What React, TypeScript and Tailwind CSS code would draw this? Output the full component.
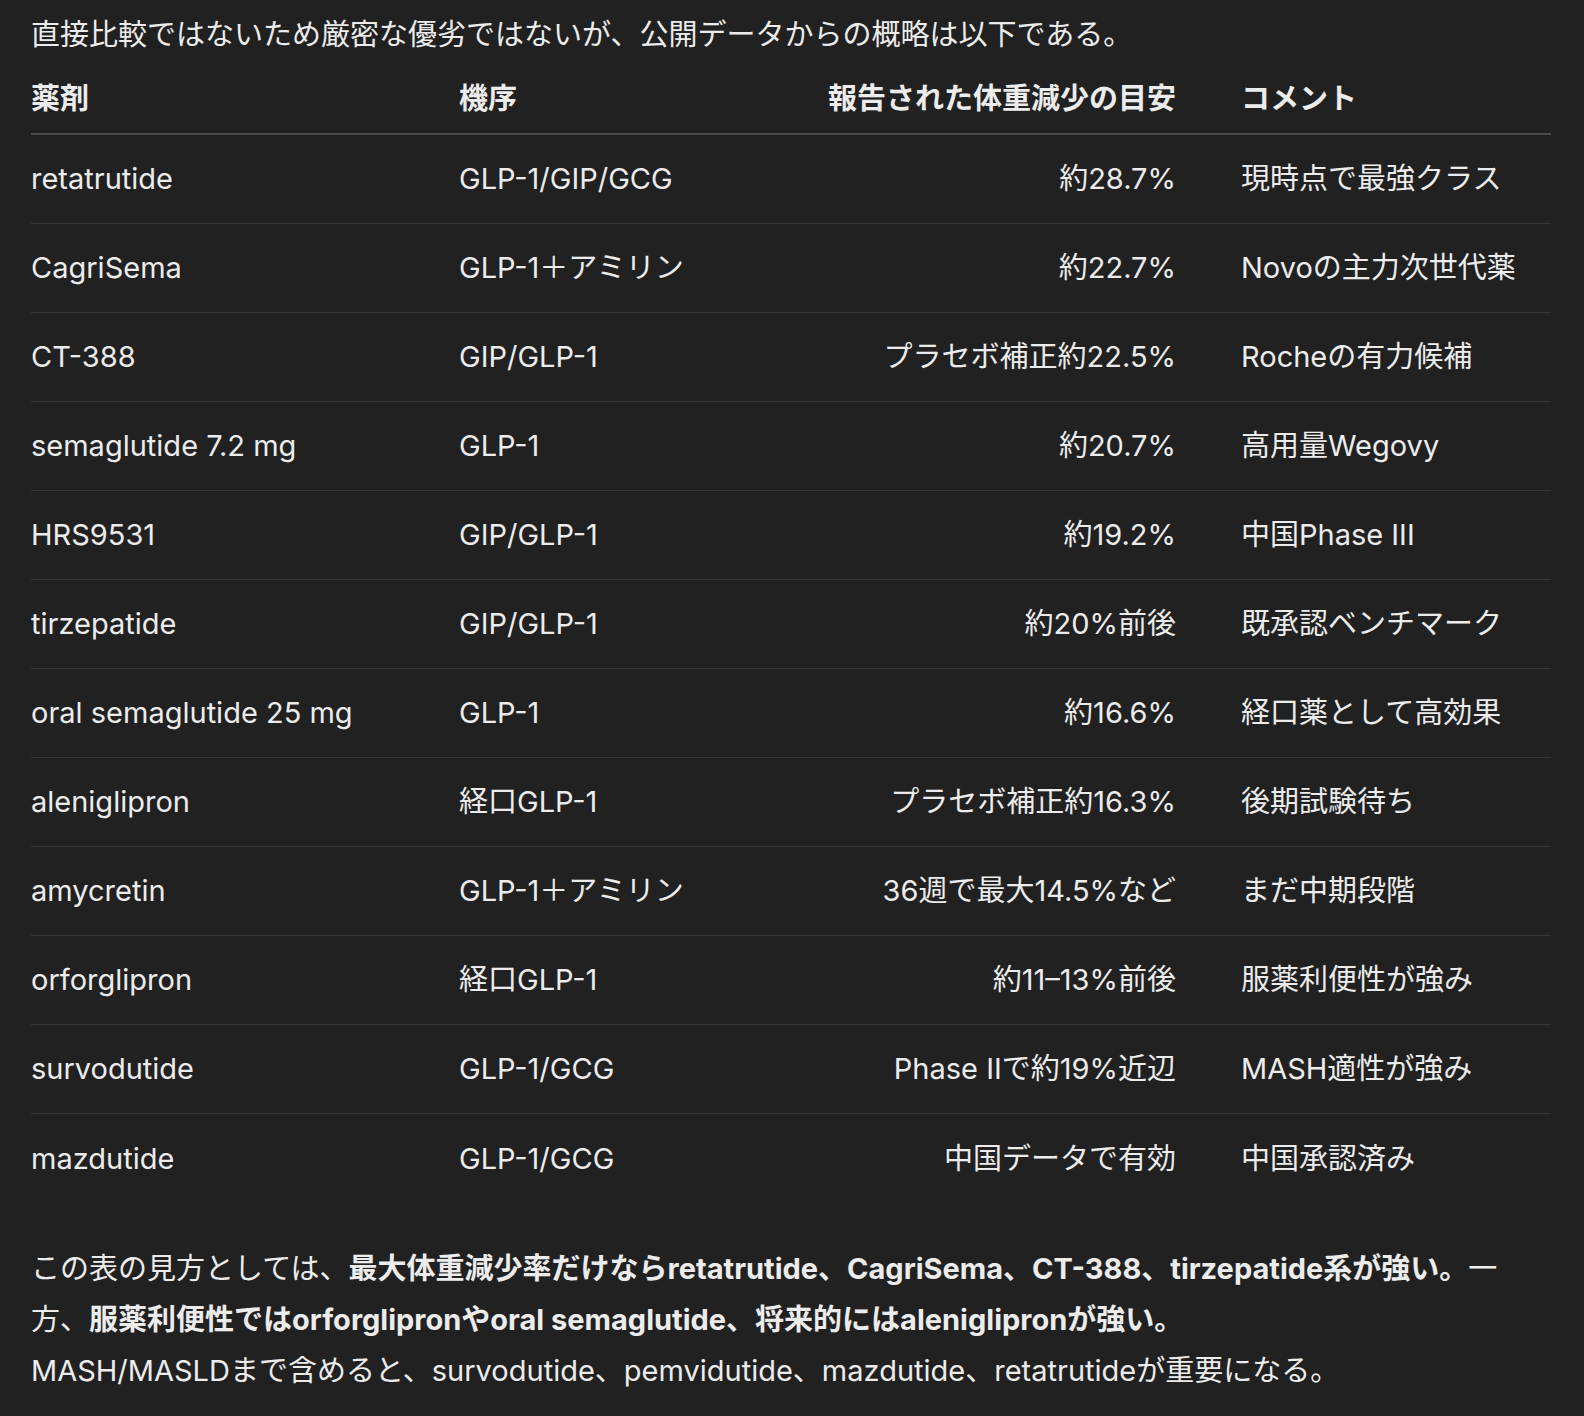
import React from "react";

const rows: [string, string, string, string][] = [
  ["retatrutide", "GLP-1/GIP/GCG", "約28.7%", "現時点で最強クラス"],
  ["CagriSema", "GLP-1＋アミリン", "約22.7%", "Novoの主力次世代薬"],
  ["CT-388", "GIP/GLP-1", "プラセボ補正約22.5%", "Rocheの有力候補"],
  ["semaglutide 7.2 mg", "GLP-1", "約20.7%", "高用量Wegovy"],
  ["HRS9531", "GIP/GLP-1", "約19.2%", "中国Phase III"],
  ["tirzepatide", "GIP/GLP-1", "約20%前後", "既承認ベンチマーク"],
  ["oral semaglutide 25 mg", "GLP-1", "約16.6%", "経口薬として高効果"],
  ["aleniglipron", "経口GLP-1", "プラセボ補正約16.3%", "後期試験待ち"],
  ["amycretin", "GLP-1＋アミリン", "36週で最大14.5%など", "まだ中期段階"],
  ["orforglipron", "経口GLP-1", "約11–13%前後", "服薬利便性が強み"],
  ["survodutide", "GLP-1/GCG", "Phase IIで約19%近辺", "MASH適性が強み"],
  ["mazdutide", "GLP-1/GCG", "中国データで有効", "中国承認済み"],
];

export default function App() {
  return (
    <div
      className="min-h-[1416px] w-[1584px] bg-[#212121] text-[#ececec] px-[31px] pt-[11px] text-[29px]"
      style={{ fontFamily: 'Inter, "Noto Sans CJK JP", sans-serif' }}
    >
      <p className="leading-[48px] whitespace-nowrap">
        直接比較ではないため厳密な優劣ではないが、公開データからの概略は以下である。
      </p>
      <div className="mt-[6px] w-[1520px]">
        <div className="flex h-[70px] items-center border-b-2 border-[#4a4a4a] font-bold">
          <div className="w-[428px] shrink-0">薬剤</div>
          <div className="w-[340px] shrink-0">機序</div>
          <div className="w-[377px] shrink-0 text-right whitespace-nowrap">報告された体重減少の目安</div>
          <div className="flex-1 pl-[65px]">コメント</div>
        </div>
        {rows.map((r, i) => (
          <div
            key={r[0]}
            className={`flex h-[89px] items-center ${i < rows.length - 1 ? "border-b border-[#363636]" : ""}`}
          >
            <div className="w-[428px] shrink-0">{r[0]}</div>
            <div className="w-[340px] shrink-0">{r[1]}</div>
            <div className="w-[377px] shrink-0 text-right whitespace-nowrap">{r[2]}</div>
            <div className="flex-1 pl-[65px] whitespace-nowrap">{r[3]}</div>
          </div>
        ))}
      </div>
      <p className="mt-[40px] w-[1500px] leading-[51px]">
        この表の見方としては、
        <b>最大体重減少率だけならretatrutide、CagriSema、CT-388、tirzepatide系が強い。</b>
        一方、
        <b>服薬利便性ではorforglipronやoral semaglutide、将来的にはaleniglipronが強い。</b>
        <br />
        MASH/MASLDまで含めると、survodutide、pemvidutide、mazdutide、retatrutideが重要になる。
      </p>
    </div>
  );
}
